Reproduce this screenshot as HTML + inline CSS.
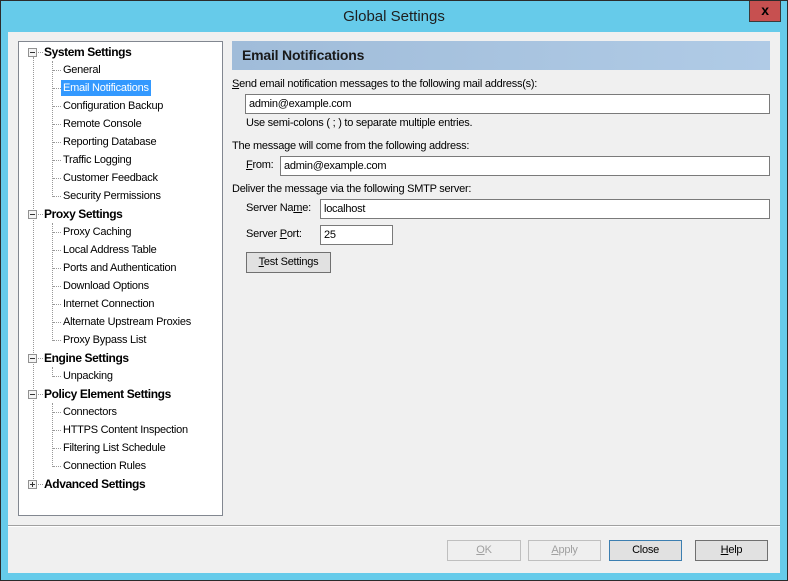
<!DOCTYPE html>
<html><head><meta charset="utf-8"><style>
*{margin:0;padding:0;box-sizing:border-box}
html,body{width:788px;height:581px;overflow:hidden}
body{background:#66cbea;font-family:"Liberation Sans",Arial,sans-serif;font-size:11px;letter-spacing:-0.25px;color:#000;position:relative;border:1px solid #2b2b2b}
.a{position:absolute;white-space:nowrap}
.title{left:0;width:786px;top:7px;text-align:center;font-size:15px;letter-spacing:0;color:#1e1e1e}
.x{left:748px;top:0;width:32px;height:21px;background:#c75050;border:1px solid #3a3a3a;border-top:none;color:#000;font-weight:bold;font-size:14px;text-align:center;line-height:19px}
.main{left:7px;top:31px;width:772px;height:541px;background:#f0f0f0}
.tree{left:17px;top:40px;width:205px;height:475px;background:#fff;border:1px solid #828790}
.it{height:18px;line-height:18px}
.h{font-weight:bold;font-size:12px;letter-spacing:-0.4px;left:43px}
.c{left:62px}
.sel{background:#3399ff;color:#fff;padding:0 2px;left:60px;line-height:16px;height:16px}
.vl{border-left:1px dotted #999;width:0}
.hl{border-top:1px dotted #999;height:0}
.box{width:9px;height:9px;border:1px solid #919191;background:#f4f4f4;left:27px}
.box:before{content:"";position:absolute;left:1px;top:3px;width:5px;height:1px;background:#333}
.plus:after{content:"";position:absolute;left:3px;top:1px;width:1px;height:5px;background:#333}
.hdr{left:231px;top:40px;width:538px;height:29px;background:linear-gradient(90deg,#a0bcd9,#b0cbe6);font-weight:bold;font-size:14px;letter-spacing:-0.2px;line-height:29px;padding-left:10px;color:#1a1a1a}
.in{background:#fff;border:1px solid #7a7a7a;height:20px;line-height:18px;padding-left:3px}
.btn{border:1px solid #707070;background:#e1e1e1;height:21px;line-height:19px;text-align:center}
.dis{border-color:#bfbfbf;color:#a0a0a0;background:#efefef}
u{text-decoration:underline}
</style></head><body>
<div class="a title">Global Settings</div>
<div class="a x">x</div>
<div class="a main"></div>
<div class="a tree"></div>

<div class="a vl" style="left:32px;top:56px;height:428px"></div>
<div class="a vl" style="left:51px;top:60px;height:136px"></div>
<div class="a vl" style="left:51px;top:222px;height:118px"></div>
<div class="a vl" style="left:51px;top:366px;height:10px"></div>
<div class="a vl" style="left:51px;top:402px;height:64px"></div>

<div class="a box" style="top:47px"></div>
<div class="a box" style="top:209px"></div>
<div class="a box" style="top:353px"></div>
<div class="a box" style="top:389px"></div>
<div class="a box plus" style="top:479px"></div>

<div class="a hl" style="left:37px;top:51px;width:5px"></div>
<div class="a hl" style="left:37px;top:213px;width:5px"></div>
<div class="a hl" style="left:37px;top:357px;width:5px"></div>
<div class="a hl" style="left:37px;top:393px;width:5px"></div>
<div class="a hl" style="left:37px;top:483px;width:5px"></div>

<div class="a hl" style="left:52px;top:69px;width:8px"></div>
<div class="a hl" style="left:52px;top:87px;width:8px"></div>
<div class="a hl" style="left:52px;top:105px;width:8px"></div>
<div class="a hl" style="left:52px;top:123px;width:8px"></div>
<div class="a hl" style="left:52px;top:141px;width:8px"></div>
<div class="a hl" style="left:52px;top:159px;width:8px"></div>
<div class="a hl" style="left:52px;top:177px;width:8px"></div>
<div class="a hl" style="left:52px;top:195px;width:8px"></div>
<div class="a hl" style="left:52px;top:231px;width:8px"></div>
<div class="a hl" style="left:52px;top:249px;width:8px"></div>
<div class="a hl" style="left:52px;top:267px;width:8px"></div>
<div class="a hl" style="left:52px;top:285px;width:8px"></div>
<div class="a hl" style="left:52px;top:303px;width:8px"></div>
<div class="a hl" style="left:52px;top:321px;width:8px"></div>
<div class="a hl" style="left:52px;top:339px;width:8px"></div>
<div class="a hl" style="left:52px;top:375px;width:8px"></div>
<div class="a hl" style="left:52px;top:411px;width:8px"></div>
<div class="a hl" style="left:52px;top:429px;width:8px"></div>
<div class="a hl" style="left:52px;top:447px;width:8px"></div>
<div class="a hl" style="left:52px;top:465px;width:8px"></div>

<div class="a it h" style="top:42px">System Settings</div>
<div class="a it c" style="top:60px">General</div>
<div class="a it sel" style="top:79px">Email Notifications</div>
<div class="a it c" style="top:96px">Configuration Backup</div>
<div class="a it c" style="top:114px">Remote Console</div>
<div class="a it c" style="top:132px">Reporting Database</div>
<div class="a it c" style="top:150px">Traffic Logging</div>
<div class="a it c" style="top:168px">Customer Feedback</div>
<div class="a it c" style="top:186px">Security Permissions</div>
<div class="a it h" style="top:204px">Proxy Settings</div>
<div class="a it c" style="top:222px">Proxy Caching</div>
<div class="a it c" style="top:240px">Local Address Table</div>
<div class="a it c" style="top:258px">Ports and Authentication</div>
<div class="a it c" style="top:276px">Download Options</div>
<div class="a it c" style="top:294px">Internet Connection</div>
<div class="a it c" style="top:312px">Alternate Upstream Proxies</div>
<div class="a it c" style="top:330px">Proxy Bypass List</div>
<div class="a it h" style="top:348px">Engine Settings</div>
<div class="a it c" style="top:366px">Unpacking</div>
<div class="a it h" style="top:384px">Policy Element Settings</div>
<div class="a it c" style="top:402px">Connectors</div>
<div class="a it c" style="top:420px">HTTPS Content Inspection</div>
<div class="a it c" style="top:438px">Filtering List Schedule</div>
<div class="a it c" style="top:456px">Connection Rules</div>
<div class="a it h" style="top:474px">Advanced Settings</div>

<div class="a hdr">Email Notifications</div>
<div class="a" style="left:231px;top:77px"><u>S</u>end email notification messages to the following mail address(s):</div>
<div class="a in" style="left:244px;top:93px;width:525px">admin@example.com</div>
<div class="a" style="left:245px;top:116px">Use semi-colons ( ; ) to separate multiple entries.</div>
<div class="a" style="left:231px;top:139px">The message will come from the following address:</div>
<div class="a" style="left:245px;top:158px"><u>F</u>rom:</div>
<div class="a in" style="left:279px;top:155px;width:490px">admin@example.com</div>
<div class="a" style="left:231px;top:182px">Deliver the message via the following SMTP server:</div>
<div class="a" style="left:245px;top:201px">Server Na<u>m</u>e:</div>
<div class="a in" style="left:319px;top:198px;width:450px">localhost</div>
<div class="a" style="left:245px;top:227px">Server <u>P</u>ort:</div>
<div class="a in" style="left:319px;top:224px;width:73px">25</div>
<div class="a btn" style="left:245px;top:251px;width:85px"><u>T</u>est Settings</div>

<div class="a" style="left:7px;top:524px;width:772px;height:2px;border-top:1px solid #a0a0a0;border-bottom:1px solid #fff"></div>
<div class="a btn dis" style="left:446px;top:539px;width:74px"><u>O</u>K</div>
<div class="a btn dis" style="left:527px;top:539px;width:73px"><u>A</u>pply</div>
<div class="a btn" style="left:608px;top:539px;width:73px;border-color:#3c7fb1">Close</div>
<div class="a btn" style="left:694px;top:539px;width:73px"><u>H</u>elp</div>
</body></html>
